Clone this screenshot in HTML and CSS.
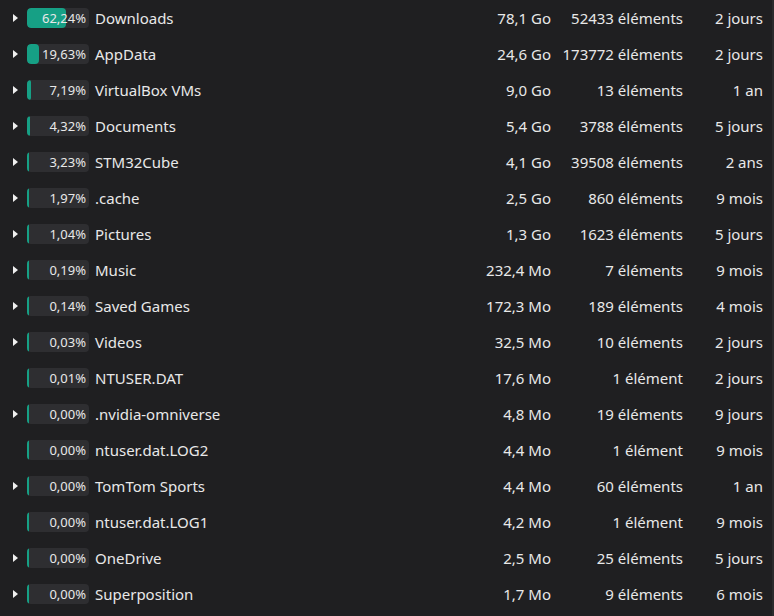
FILE: index.html
```html
<!DOCTYPE html>
<html lang="fr">
<head>
    <meta charset="UTF-8">
    <meta name="viewport" content="width=device-width, initial-scale=1.0">
    <title>Utilisation du disque</title>
    <link rel="stylesheet" href="styles.css">
</head>
<body>
    <div class="tree" id="tree">
        <!-- Rows are built by the script below -->
    </div>

    <script>
        const entries = [
            ['Downloads', 62.24, '78,1 Go', '52433 éléments', '2 jours', true],
            ['AppData', 19.63, '24,6 Go', '173772 éléments', '2 jours', true],
            ['VirtualBox VMs', 7.19, '9,0 Go', '13 éléments', '1 an', true],
            ['Documents', 4.32, '5,4 Go', '3788 éléments', '5 jours', true],
            ['STM32Cube', 3.23, '4,1 Go', '39508 éléments', '2 ans', true],
            ['.cache', 1.97, '2,5 Go', '860 éléments', '9 mois', true],
            ['Pictures', 1.04, '1,3 Go', '1623 éléments', '5 jours', true],
            ['Music', 0.19, '232,4 Mo', '7 éléments', '9 mois', true],
            ['Saved Games', 0.14, '172,3 Mo', '189 éléments', '4 mois', true],
            ['Videos', 0.03, '32,5 Mo', '10 éléments', '2 jours', true],
            ['NTUSER.DAT', 0.01, '17,6 Mo', '1 élément', '2 jours', false],
            ['.nvidia-omniverse', 0.00, '4,8 Mo', '19 éléments', '9 jours', true],
            ['ntuser.dat.LOG2', 0.00, '4,4 Mo', '1 élément', '9 mois', false],
            ['TomTom Sports', 0.00, '4,4 Mo', '60 éléments', '1 an', true],
            ['ntuser.dat.LOG1', 0.00, '4,2 Mo', '1 élément', '9 mois', false],
            ['OneDrive', 0.00, '2,5 Mo', '25 éléments', '5 jours', true],
            ['Superposition', 0.00, '1,7 Mo', '9 éléments', '6 mois', true]
        ];

        const tree = document.getElementById('tree');

        entries.forEach(([name, pct, size, count, age, folder]) => {
            const row = document.createElement('div');
            row.className = 'row';
            row.innerHTML = `
                <span class="expander">${folder ? '<span class="arrow"></span>' : ''}</span>
                <span class="bar">
                    <span class="fill" style="width: ${Math.max(pct, 2.5)}%"></span>
                    <span class="pct">${pct.toFixed(2).replace('.', ',')}%</span>
                </span>
                <span class="name">${name}</span>
                <span class="size">${size}</span>
                <span class="count">${count}</span>
                <span class="age">${age}</span>
            `;
            tree.appendChild(row);
        });
    </script>
</body>
</html>
```

FILE: styles.css
```css
html, body {
    margin: 0;
    padding: 0;
    height: 100%;
}
body {
    font-family: "Noto Sans", "Open Sans", sans-serif;
    font-size: 15px;
    color: #e8e8e8;
    background: #1f1f21;
    overflow: hidden;
}
.tree {
    height: 100%;
    border-right: 2px solid #2a2a2c;
    box-sizing: border-box;
}
.row {
    display: flex;
    align-items: center;
    height: 36px;
}
.expander {
    width: 27px;
    display: flex;
    justify-content: center;
    padding-left: 4px;
    box-sizing: border-box;
}
.arrow {
    width: 0;
    height: 0;
    border-top: 4px solid transparent;
    border-bottom: 4px solid transparent;
    border-left: 5px solid #f0f0f0;
}
.bar {
    position: relative;
    width: 62px;
    height: 20px;
    border-radius: 4px;
    background: #2e2e31;
    overflow: hidden;
}
.fill {
    position: absolute;
    left: 0;
    top: 0;
    bottom: 0;
    background: #16a085;
    border-radius: 4px;
}
.pct {
    position: absolute;
    right: 3px;
    top: 0;
    line-height: 20px;
    font-size: 13px;
    color: #e8e8e8;
}
.name {
    margin-left: 6px;
    flex: 1;
}
.size {
    width: 110px;
    text-align: right;
}
.count {
    width: 132px;
    text-align: right;
}
.age {
    width: 80px;
    text-align: right;
    margin-right: 9px;
}
```
